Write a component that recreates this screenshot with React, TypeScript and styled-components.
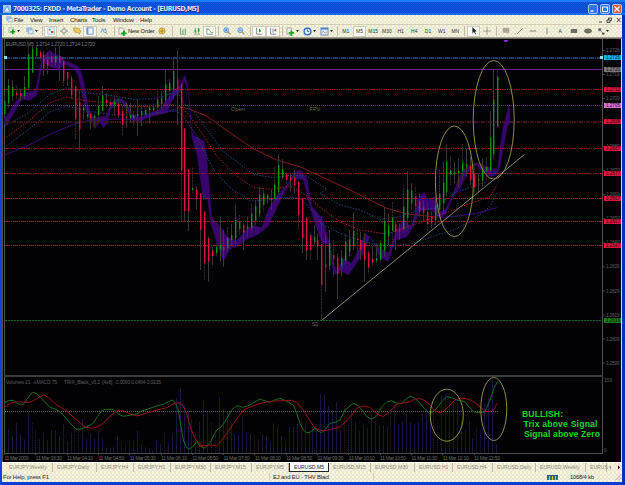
import React from "react";
import styled, { createGlobalStyle } from "styled-components";

const GlobalStyle = createGlobalStyle`
  * { box-sizing: border-box; }
  body { margin: 0; background: #000; overflow: hidden; font-family: "Liberation Sans", Arial, sans-serif; }
`;

const Window = styled.div`
  width: 625px;
  height: 485px;
  display: grid;
  grid-template-rows: 15px 9px 14px 424px 10px 10px 3px;
  background: #0a3fd2;
  border-left: 2px solid #0a46dc;
  border-right: 3px solid #0830bc;
`;

const dither = `
  background-color: #e8e5d4;
  background-image: conic-gradient(#fbfad8 25%, transparent 0 50%, #f3f1e2 0 75%, transparent 0);
  background-size: 4px 4px;
`;

const TitleBar = styled.header`
  display: flex;
  align-items: center;
  gap: 2px;
  background-color: #0a4fd8;
  background-image: linear-gradient(#187cf8 2px, transparent 2px 13px, #136cf0 13px),
    conic-gradient(#0b46cf 25%, #0d5be2 0 50%, #0b46cf 0 75%, #0d5be2 0);
  background-size: 100% 100%, 2px 2px;
  margin: 0 -3px 0 -2px;
  padding: 2px 3px 0 3px;
`;

const Title = styled.h1`
  flex: 1;
  margin: 0;
  font: bold 6.9px "DejaVu Sans Condensed", "DejaVu Sans", sans-serif;
  letter-spacing: -0.53px;
  word-spacing: 0.3px;
  color: #dfe8f8;
  text-shadow: 0.5px 0.5px #082a8c;
  white-space: pre;
`;

const WinButton = styled.span<{ $close?: boolean }>`
  display: flex;
  width: 10px;
  height: 10px;
  border: 1px solid #a9c6f4;
  border-radius: 2px;
  background: ${(p) => (p.$close ? "#d65a35" : "#3274e6")};
  svg { display: block; width: 8px; height: 8px; }
`;

const MenuBar = styled.nav`
  ${dither}
  display: flex;
  align-items: center;
  padding-left: 2px;
  font-size: 6px;
  color: #161616;
`;

const MenuItem = styled.span<{ $w: number }>`
  width: ${(p) => p.$w}px;
  line-height: 8px;
  letter-spacing: -0.1px;
`;

const ChildControls = styled.span`
  margin-left: auto;
  height: 8px;
  svg { display: block; }
`;

const ToolBar = styled.div`
  ${dither}
  display: flex;
  align-items: center;
  border-top: 1px solid #d4cdb9;
  border-bottom: 1px solid #a39c88;
`;

const Tool = styled.span<{ $w: number; $on?: boolean }>`
  display: flex;
  flex: none;
  align-items: center;
  justify-content: center;
  width: ${(p) => p.$w}px;
  height: 11px;
  font-size: 5px;
  color: #333;
  background: ${(p) => (p.$on ? "#faf9f2" : "transparent")};
  box-shadow: ${(p) => (p.$on ? "inset 0 0 0 1px #cfcab8" : "none")};
  svg { display: block; }
`;

const OrderLabel = styled.span`
  flex: none;
  width: 29px;
  padding-left: 1px;
  font-size: 5.7px;
  letter-spacing: -0.1px;
  line-height: 8px;
  color: #111;
  white-space: nowrap;
`;

const Divider = styled.i<{ $m?: number }>`
  flex: none;
  width: 1px;
  height: 10px;
  margin: 0 ${(p) => p.$m ?? 1}px;
  background: #c2bca8;
`;

const ChartArea = styled.main`
  background: #020204;
  border-top: 1px solid #6c6a64;
  border-right: 1px solid #dcd8cc;
  svg { display: block; margin-top: -1px; }
`;

const TabStrip = styled.nav`
  ${dither}
  display: flex;
  padding-left: 3px;
  border-top: 1px solid #fff;
  font-size: 5.1px;
  color: #8d8a78;
`;

const Tab = styled.span<{ $w: number; $active?: boolean }>`
  flex: none;
  width: ${(p) => p.$w}px;
  height: 9px;
  padding-left: 4px;
  line-height: 9px;
  white-space: nowrap;
  color: ${(p) => (p.$active ? "#222" : "inherit")};
  background: ${(p) => (p.$active ? "#fff" : "transparent")};
  border: 0 solid ${(p) => (p.$active ? "#222" : "#bdb8a6")};
  border-width: ${(p) => (p.$active ? "0 1px 1px 1px" : "0 1px 0 0")};
`;

const TabArrows = styled.span`
  flex: 1;
  display: flex;
  justify-content: flex-end;
  align-items: center;
  svg { display: block; }
`;

const StatusBar = styled.footer`
  ${dither}
  display: flex;
  align-items: center;
  font-size: 5.8px;
  color: #1c1c1c;
  white-space: nowrap;
`;

const StatusCell = styled.span<{ $w: number; $pad?: number }>`
  flex: none;
  width: ${(p) => p.$w}px;
  padding-left: ${(p) => p.$pad ?? 1}px;
  line-height: 8px;
  border-right: 1px solid #d4c9b4;
  letter-spacing: -0.12px;
`;

const Bars = styled.span`
  width: 11px;
  height: 5px;
  margin-left: 34px;
  margin-right: 12px;
  background: repeating-linear-gradient(90deg, #2c7a52 0 2px, #b9cc50 2px 3px);
  border-top: 1px solid #28548c;
`;

const Grip = styled.svg`
  margin-left: auto;
`;

const Rate = styled.span`
  letter-spacing: -0.2px;
`;

type Pt = [number, number];

/* Series are stored in thirds of a pixel, relative to a section origin. */
const at = (ox: number, oy: number, raw: string): Pt[] =>
  raw.split(" ").map((s) => {
    const [x, y] = s.split(",").map(Number);
    return [ox + x / 3, oy + y / 3];
  });
const pts = (...parts: Pt[][]) => parts.flat().map(([x, y]) => `${x.toFixed(1)},${y.toFixed(1)}`).join(" ");

interface Candle { x: number; up: boolean; top: number; bottom: number; high: number; low: number; }

const candles = (ox: number, oy: number, raw: string): Candle[] =>
  raw.trim().split(/\s+/).map((s) => {
    const [x, t, b, h, l] = s.slice(1).split(",").map(Number);
    return { x: Math.floor(ox + x / 3), up: s[0] === "g", top: oy + t / 3, bottom: oy + b / 3, high: oy + h / 3, low: oy + l / 3 };
  });

const CANDLES: Candle[] = [
  ...candles(0, 36, `g14,195,235,180,245 g26,148,202,130,215 g38,153,180,133,195 r50,170,178,150,190 r62,172,180,160,195
   g74,153,180,120,190 g86,55,155,30,165 g97,38,110,30,110 g108,35,60,30,65 r120,48,65,40,75 r131,57,97,45,120
   r143,70,90,50,115 r154,62,78,50,90 g166,60,80,35,90 r178,60,80,30,135 r190,75,135,75,150 r202,108,128,108,150
   r213,127,178,120,190 r225,150,248,150,310 r237,198,280,160,345 g249,215,223,210,250 g261,235,243,210,250
   r272,233,247,230,280 g284,240,245,235,275 g296,210,238,180,260 g308,178,225,150,225 r319,192,200,170,215
   r331,198,208,190,215 g343,197,207,180,240 r354,203,238,185,245 r366,225,268,210,300 r378,242,246,200,275
   g390,238,245,200,260 g401,238,246,225,270 g413,235,240,190,300 g425,225,238,210,270 g437,222,236,205,245
   g448,215,222,205,262 g460,215,222,205,225 g472,190,215,160,235 g484,185,205,165,220 g496,145,192,100,205
   g507,140,165,130,190 g519,105,160,65,190 r531,130,160,42,268 r543,145,405,145,555`),
  ...candles(140, 36, `r134,277,525,277,555 r145,400,525,400,585 g157,456,462,395,470 r169,462,490,450,520`),
  ...candles(180, 150, `r61,130,240,130,360 r73,185,340,185,390 r85,265,335,260,395 r97,300,318,290,345 g108,290,310,280,320
   g120,285,298,200,335 r131,290,300,240,350 g143,262,295,230,305 g155,255,270,220,285 g167,210,265,163,280
   g179,215,237,195,255 r190,225,248,220,300 g202,230,237,200,260 g214,190,235,160,250 g226,168,212,150,225
   g237,135,190,110,200 g249,130,165,115,185 g261,137,147,130,160 r273,145,150,120,180 g284,103,147,50,160
   g296,45,125,13,135 g308,57,83,28,90 r320,72,90,65,100 r331,80,92,70,125 r343,83,107,60,130 r354,95,195,95,240
   r366,145,265,145,310 r378,205,303,200,330 r390,255,300,250,330 g402,262,275,225,285 r413,270,290,250,330
   r425,282,405,200,510 r437,343,352,255,425 g449,280,347,240,360 r460,315,328,270,380 r472,322,372,310,447
   g484,323,347,300,380 g496,275,332,250,345 g508,268,305,240,320 g519,243,288,187,300 r531,265,270,240,330`),
  ...candles(320, 130, `r122,330,360,305,390 r133,340,390,310,455 r145,367,413,360,430 r157,388,398,350,405 g169,385,392,340,400
   g181,338,390,330,400 g193,272,362,232,380 g204,287,320,250,345 g216,262,302,215,335 r227,282,305,275,360
   r239,298,305,280,330 g251,230,298,165,310 g263,178,265,122,290 g275,182,220,160,240 r286,198,228,170,245
   r298,215,245,190,260 r310,232,248,210,275 r322,245,282,220,305 r333,258,280,245,295 g345,225,270,200,285
   g357,190,240,120,250 g369,158,220,95,250 g380,95,187,43,200 g392,120,135,80,165 g404,126,130,95,160
   g416,122,130,85,170 g427,97,125,43,150 g439,103,110,55,140 r451,108,150,80,165 r462,130,172,100,190
   g474,148,152,130,190 g486,115,152,85,170 g498,110,125,80,150`),
  ...candles(420, 36, `g210,305,402,225,405 g221,190,355,100,370 g233,122,272,100,272`),
];

const CLOUD = pts(
  at(0, 36, "12,245 25,235 35,215 50,195 65,172 85,168 105,165 112,140 120,90 128,65 148,42 165,55 185,62 195,75 215,82 235,92 243,110 252,140 262,200 275,240 290,245 320,240 330,205 345,190 365,188 380,200 395,235 420,245 450,232 480,220 500,192 520,165 540,150 554,118 562,140 568,190 573,265 580,298"),
  at(140, 36, "165,300 192,315 200,360 210,480 215,545 240,570 262,605 290,615 320,580 340,568 365,575 385,520 410,480 440,447 465,410 480,402 500,425 515,510 530,528"),
  at(180, 150, "425,205 435,230 448,280 460,340 470,366"),
  at(320, 130, "60,405 72,385 95,400 120,350 135,310 155,325 170,350 190,360 205,370 230,300 250,270 275,290 295,205 312,185 325,210 345,200 360,245 375,240 400,190 415,145 440,110 470,98 500,108 525,120 533,115"),
  at(420, 36, "240,340 250,270 268,205 270,255 260,280 240,390 230,415"),
  at(320, 130, "515,140 490,130 470,105 445,125 420,175 400,200 375,254 360,265 335,240 300,240 280,290 260,320 225,330 205,395 175,375 160,335 150,320 130,370 105,405 85,435 60,420 45,435"),
  at(180, 150, "465,374 455,335 445,282 425,275 410,235 395,190"),
  at(140, 36, "490,430 455,430 440,455 420,495 385,570 355,595 320,610 300,625 270,640 250,675 230,620 212,560 203,490 190,490 180,420 172,360 155,300 149,200"),
  at(0, 36, "562,160 554,135 540,165 520,185 500,230 450,242 420,255 400,257 385,230 365,197 345,205 330,225 322,262 310,276 300,255 285,278 270,250 255,215 245,165 235,120 225,98 195,85 175,98 150,92 128,75 120,120 110,178 90,193 65,190 45,225 30,250 15,275"),
);

const MAS: { color: string; dash?: string; points: string }[] = [
  { color: "#24467e", dash: "1.4 1.5", points: pts(at(0, 36, "12,270 80,235 150,175 200,155 250,170 310,175 400,190 470,188 530,165"), at(140, 36, "130,200 165,230 200,280 250,345 300,385 340,415 400,425 450,418 500,420 560,460"), at(320, 130, "0,190 60,225 120,240 180,268 230,262 300,240 345,235 400,190 470,165 500,155")) },
  { color: "#b01a28", dash: "1.4 1.5", points: pts(at(0, 36, "12,308 80,260 150,200 200,183 260,195 330,200 400,213 470,210 520,205 550,220"), at(140, 36, "145,235 185,290 230,360 290,420 340,455 400,460 450,450 500,480"), at(320, 130, "0,232 60,275 120,300 200,312 280,285 345,260 400,240 450,220 510,200 530,165")) },
  { color: "#24427e", dash: "1.4 1.5", points: pts(at(0, 36, "12,335 80,285 150,228 200,210 260,225 330,235 400,238 530,225"), at(140, 36, "130,240 170,300 220,400 270,455 330,495 380,492 430,485 480,485 530,540"), at(320, 130, "0,280 60,310 130,335 200,350 280,340 350,315 400,300 450,275 510,230 530,190")) },
  { color: "#3d0a74", points: pts(at(0, 36, "12,358 80,330 150,295 220,265 280,250 400,250 470,235 530,218")) },
  { color: "#7c1c1c", points: pts(at(140, 36, "120,212 150,220 200,240 270,290 340,338 410,372 480,392"), at(320, 130, "0,138 100,185 200,235 260,252 340,260")) },
  { color: "#3d0a74", points: pts(at(320, 130, "350,262 400,260 470,250 530,233")) },
];

const LEVELS = [
  { y: 57, color: "#17406c", dash: "5 1 1 1", tag: "#08b4f0", label: "1.2726", w: 1.6 },
  { y: 69, color: "#6a1c9c", dash: undefined, tag: "#777", label: "1.2720", w: 1 },
  { y: 89, color: "#960f22", dash: "4 1 1 1", tag: "#dc143c", label: "1.2712", w: 1 },
  { y: 105, color: "#74318c", dash: "1 1", tag: "#da70d6", label: "1.2705", w: 1 },
  { y: 121, color: "#3c1412", dash: "4 1 1 1", tag: "#dc143c", label: "1.2699", w: 2 },
  { y: 148, color: "#960f22", dash: "4 1 1 1", tag: "#dc143c", label: "1.2687", w: 1 },
  { y: 173, color: "#960f22", dash: "4 1 1 1", tag: "#dc143c", label: "1.2677", w: 1 },
  { y: 198, color: "#a01020", dash: "5 1 1 1", tag: "#dc143c", label: "1.2667", w: 1 },
  { y: 221, color: "#a01020", dash: "5 1 1 1", tag: "#dc143c", label: "1.2657", w: 1 },
  { y: 245, color: "#a01020", dash: "5 1 1 1", tag: "#dc143c", label: "1.2647", w: 1 },
  { y: 320, color: "#14691c", dash: "1.5 1.5", tag: "#158015", label: "1.2616", w: 1 },
];

/* The 1.2699 tick is fully covered by its level tag. */
const PRICES = ["1.2728", "1.2719", "1.2709", "", "1.2689", "1.2679", "1.2669", "1.2659", "1.2649", "1.2639", "1.2629", "1.2619", "1.2609", "1.2599"];
const TIMES = ["2009", "03:30", "04:10", "04:50", "05:30", "06:10", "06:50", "07:30", "08:10", "08:50", "09:30", "10:10", "10:50", "11:30", "12:10", "12:50"];

/* Bar tops of the volume histogram, oldest first. */
const VOLUMES = [178, 198, 158, 193, 208, 125, 158, 180, 208, 188, 210, 178, 182, 198, 162, 213, 188, 158, 158, 147, 208, 190, 205, 180, 205, 232, 235, 232, 198, 215, 220, 212, 210, 182, 222, 232, 235, 240, 210, 222, 188, 220, 190, 85, 55, 105, 120, 148, 188, 155, 90, 130, 158, 180, 82, 115, 125, 158, 192, 195, 140, 188, 192, 195, 208, 195, 198, 218, 160, 172, 198, 215, 170, 170, 160, 150, 160, 182, 170, 180, 72, 75, 108, 120, 95, 180, 108, 165, 120, 155, 182, 160, 175, 130, 155, 165, 165, 170, 130, 110, 165, 155, 120, 158, 162, 158, 130, 115, 110, 130, 150, 75, 70, 98, 100, 100, 150, 180, 152, 205, 175, 180, 100, 85, 30, 222];
const DASHED = new Set([6, 7, 17, 18, 29, 30, 40, 52, 53, 63, 64, 75, 86, 87, 98, 109, 110, 120, 121]);
const RED_VOL = new Set([29, 40, 63, 64, 75, 86, 98, 109]);

const TRIX = pts(
  at(0, 370, "12,98 25,92 40,91 55,102 70,103 80,88 97,67 110,71 120,80 135,97 150,112 165,117 180,125 200,147 215,165 228,177 240,178 260,170 280,160 292,140 305,122 320,118 340,118 355,132 370,139 390,136 410,132 425,123 450,115 470,108 490,103 505,95 518,90 528,103 535,120 542,165 550,210 558,230 567,238 578,230 590,215"),
  at(200, 370, "0,228 12,235 30,220 40,198 50,180 62,172 75,155 95,120 110,107 130,112 150,105 165,95 180,88 210,97 225,90 240,85 260,94 280,105 290,130 300,160 310,180 320,188 330,187 345,175 355,183 365,188 378,175 390,160 405,157 420,150 435,120 460,100 475,107 490,125 500,140 515,147 530,138 545,110 560,96 575,92 590,100 605,100 620,86"),
  at(410, 370, "0,79 15,85 30,100 45,118 60,132 80,115 95,95 110,80 125,83 140,90 165,95 175,108 190,125 207,128 225,125 240,90 252,55 262,35"),
);
const SIGNAL = pts(
  at(0, 370, "12,113 30,100 50,95 90,97 110,86 130,75 145,82 170,105 200,123 230,150 255,171 275,175 295,169 310,160 330,138 350,122 370,123 390,132 410,138 440,129 470,120 500,113 520,102 535,98 548,106 560,130 572,175 585,205 595,218 610,228"),
  at(200, 370, "0,229 30,225 50,227 65,212 80,190 105,155 130,120 160,107 190,98 220,93 250,92 275,91 290,97 310,120 330,152 345,175 370,183 395,178 420,170 445,148 470,115 490,108 510,112 530,132 550,140 570,123 590,103 610,99"),
  at(410, 370, "0,95 15,87 30,86 45,92 60,105 75,123 90,128 105,120 120,105 135,90 150,85 165,85 180,90 195,98 210,110 225,124 240,125 252,118 262,100"),
);

function PriceAxis() {
  return (
    <g fontSize="5">
      {PRICES.map((p, i) => (
        <g key={i}>
          <path d={`M603 ${50.5 + i * 24.05}h2`} stroke="#4a4a4a" />
          {p && <text x="606" y={52 + i * 24.05} fill="#5a5a5a" textLength="13.5">{p}</text>}
        </g>
      ))}
      {LEVELS.map((l) => (
        <g key={l.label}>
          <rect x="604" y={l.y - 2} width="17" height="5" fill={l.tag} />
          <text x="606" y={l.y + 2.3} fill="#190612" textLength="14" lengthAdjust="spacingAndGlyphs">{l.label}</text>
        </g>
      ))}
      <text x="604" y="382" fill="#565656" textLength="8">159</text>
      <text x="604" y="452" fill="#565656">0</text>
    </g>
  );
}

function Chart() {
  return (
    <svg width="619" height="424" viewBox="2 38 619 424" fontFamily='"Liberation Sans", Arial, sans-serif'>
      <path d="M2.5 38v424M4.5 39v415M602.5 39v415M4 453.5h599" stroke="#4c4c4c" fill="none" />
      <rect x="4" y="375" width="599" height="2" fill="#3c3c3c" />
      <polygon points={CLOUD} fill="#37056c" stroke="#37056c" strokeWidth="0.5" />
      {MAS.map((m, i) => (
        <polyline key={i} points={m.points} fill="none" stroke={m.color} strokeDasharray={m.dash} strokeWidth="1" />
      ))}
      <g shapeRendering="crispEdges">
        {LEVELS.map((l) => (
          <path key={l.y} d={`M5 ${l.y + (l.w > 1 ? 1 : 0.5)}H602`} stroke={l.color} strokeWidth={l.w} strokeDasharray={l.dash} />
        ))}
      </g>
      <rect x="4" y="56" width="3" height="3" fill="#8fd8f4" />
      <rect x="600" y="56" width="3" height="3" fill="#8fd8f4" />
      <path d="M503.500 40h5l-1.500 2h-2z" fill="#8a2be2" />
      {CANDLES.map((c, i) => (
        <g key={i}>
          <path d={`M${c.x + 0.5} ${c.high}V${c.low}`} stroke="#373737" strokeDasharray={i % 3 ? undefined : "1 0.5"} />
          <rect x={c.x} y={c.top} width="1.4" height={Math.max(1, c.bottom - c.top)} fill={c.up ? "#149018" : "#df1044"} />
        </g>
      ))}
      <g fill="#666" fontSize="5.6">
        <text x="231" y="111" textLength="14">Open</text>
        <text x="309.5" y="111" textLength="11">FPV</text>
        <text x="312" y="326" textLength="6.5">S1</text>
        <text x="6" y="45.5" fontSize="5" fill="#757575" textLength="89">EURUSD,M5&nbsp; 1.2714 1.2720 1.2714 1.2720</text>
        <text x="6" y="383.5" fontSize="5" fill="#5c5c5c" textLength="51">Volumes 21&nbsp; -xMACD 75</text>
        <text x="64" y="383.5" fontSize="5" fill="#5c5c5c" textLength="97">TRIX_Black_v5.2&nbsp; [4x8]&nbsp;&nbsp; 0.0090 0.0404 0.0135</text>
      </g>
      <path d="M321.5 320.5L524.5 154.5" stroke="#8b8778" strokeWidth="1" />

      {VOLUMES.map((v, i) => (
        <path key={i} d={`M${Math.floor(8.6 + i * 3.902) + 0.5} ${370 + v / 3}V453`} stroke={RED_VOL.has(i) ? "#3a1020" : "#17173a"} strokeDasharray={DASHED.has(i) ? "1.4 1" : undefined} />
      ))}
      <path d="M5 411.5H498" stroke="#656565" strokeDasharray="1 1" />
      <polyline points={TRIX} fill="none" stroke="#146e1a" />
      <polyline points={SIGNAL} fill="none" stroke="#960f1c" />
      <g fill="none" stroke="#8e8a44" strokeWidth="1">
        <ellipse cx="493.7" cy="119.8" rx="20.5" ry="59.3" />
        <ellipse cx="454.4" cy="181.3" rx="19" ry="55.3" />
        <ellipse cx="446.8" cy="415.2" rx="16.5" ry="26" />
        <ellipse cx="493.8" cy="409" rx="13" ry="31.5" />
      </g>
      <g fill="#16d82a" fontSize="8.6" fontWeight="bold">
        <text x="522" y="416.5" textLength="41">BULLISH:</text>
        <text x="523.5" y="426.5" textLength="74">Trix above Signal</text>
        <text x="524" y="436.5" textLength="76">Signal above Zero</text>
      </g>
      <g fill="#6a6a6a" fontSize="5">
        {TIMES.map((t, i) => (
          <g key={t}>
            <path d={`M${Math.round(4 + i * 31.3) + 0.5} 453v2`} stroke="#4c4c4c" />
            <text x={4.5 + i * 31.3} y="460" textLength={i ? 26 : 24}>{`11 Mar ${t}`}</text>
          </g>
        ))}
      </g>
      <PriceAxis />
    </svg>
  );
}

const GLYPHS: Record<string, React.ReactNode> = {
  newChart: <><path d="M1 1h6v6h-6z" fill="#dfe9e0" stroke="#7a9a80" strokeWidth=".6" /><path d="M3 6h6M6 3v6" stroke="#12a018" strokeWidth="2" /></>,
  profiles: <><path d="M1 1h6v5h-6z" fill="#a9cdf2" stroke="#6a94c4" strokeWidth=".7" /><path d="M3 3.5h6v5h-6z" fill="#dceaf8" stroke="#6a94c4" strokeWidth=".7" /></>,
  market: <><path d="M1 1h8v8h-8z" fill="#f4f8fc" stroke="#78aacc" strokeWidth=".7" /><path d="M2.5 2.5h2v2h-2z" fill="#2b9c38" /><path d="M5 5h3v2.5h-3z" fill="#dc4630" /></>,
  move: <><path d="M5 0v10M0 5h10" stroke="#898575" /><circle cx="5" cy="5" r="2.6" fill="#f2f0e4" stroke="#777" strokeWidth=".9" /></>,
  folder: <path d="M1 1h3l1 1h3v2l2 1-2 4-1-2H3V5H1z" fill="#f0cf52" stroke="#a68627" strokeWidth=".7" />,
  panel: <><path d="M1 1h8v8h-8z" fill="#f0f6fc" stroke="#5583bf" strokeWidth=".9" /><path d="M1 1h2v8H1z" fill="#6c98cd" /></>,
  tester: <><path d="M1 7l2-5 2 4 2-4v6" fill="none" stroke="#6b9cc8" /><circle cx="6" cy="5" r="2" fill="#cce2f5" stroke="#5580aa" strokeWidth=".6" /><path d="M7.5 6.5l2 2.5" stroke="#b58d40" /></>,
  order: <><path d="M1 1h4l2 2v5H1z" fill="#f1eee4" stroke="#777" strokeWidth=".6" /><path d="M3.5 7h6M6.5 4v6" stroke="#0fa01c" strokeWidth="2" /></>,
  expert: <><circle cx="5" cy="5" r="3.9" fill="#f0d05c" stroke="#a68436" strokeWidth=".9" /><path d="M5 2v6M2 5h6" stroke="#a47b15" /></>,
  bars: <path d="M2 1v8h7M5 3v5M8 2v6M4 6h1M7 4h1" fill="none" stroke="#3c8c48" strokeWidth=".9" />,
  candlesIcon: <><path d="M1 9h8M3 1v7M7 1v7" stroke="#5e8a60" strokeWidth=".8" /><path d="M2 4h2v3H2zM6 2h2v4H6z" fill="#2b9a3a" /></>,
  lineIcon: <path d="M1 1v8h8M1 3q3 -1 4 2t4 2" fill="none" stroke="#4c8c54" strokeWidth=".9" />,
  zoomIn: <><circle cx="4" cy="4" r="3" fill="#b8d8f4" stroke="#3c7cc4" strokeWidth=".9" /><path d="M2.5 4h3M4 2.5v3" stroke="#285ea8" strokeWidth=".8" /><path d="M6.3 6.3l3 3" stroke="#b98d2c" strokeWidth="1.4" /></>,
  zoomOut: <><circle cx="4" cy="4" r="3" fill="#b8d8f4" stroke="#3c7cc4" strokeWidth=".9" /><path d="M2.5 4h3" stroke="#285ea8" strokeWidth=".8" /><path d="M6.3 6.3l3 3" stroke="#b98d2c" strokeWidth="1.4" /></>,
  scroll: <><path d="M2 1v8h7" fill="none" stroke="#555" strokeWidth=".8" /><path d="M5 2l3 3-3 2z" fill="#189c28" /></>,
  shift: <><path d="M2 1v8h7M5 2v5" fill="none" stroke="#456e9c" strokeWidth=".9" /><path d="M9 2v4L6 4z" fill="#c05030" /></>,
  indicator: <><path d="M1 1h5v7H1z" fill="#eee" stroke="#777" strokeWidth=".6" /><path d="M3 6.5h6M6 4v6" stroke="#14a81c" strokeWidth="2" /></>,
  clock: <><circle cx="5" cy="5" r="3.8" fill="#dcecff" stroke="#2464bc" strokeWidth="1.4" /><path d="M5 2.5V5h2" fill="none" stroke="#234" strokeWidth=".7" /></>,
  template: <><path d="M1 1h8v8H1z" fill="#d9e9f7" stroke="#5684b8" strokeWidth=".9" /><path d="M1 2h8" stroke="#4478bc" strokeWidth="1.5" /><path d="M2 6l2-1 2 2 2-2" fill="none" stroke="#d07a48" strokeWidth=".8" /></>,
  cursor: <path d="M3 0v8l2-2 1.4 3 1-.5L6 5.5h2.5z" fill="#222" />,
  cross: <path d="M5 0v10M0 5h10" stroke="#8a8778" strokeWidth=".9" />,
  fibo: <><path d="M1 1h8v6H1z" fill="#bcb8a6" /><path d="M1 2.5h8M1 4.5h8M1 6.5h8M7 8.5h2" stroke="#827e6e" strokeWidth=".6" /></>,
  trend: <path d="M1.500 8.500l7-7" stroke="#777" strokeWidth="1.1" />,
  hline: <path d="M1 5h8" stroke="#777" strokeWidth="1.1" />,
  vline: <path d="M5 1v8" stroke="#777" strokeWidth="1.1" />,
  rect: <rect x="1" y="2.5" width="8" height="5" fill="#6f6d64" />,
  ellipse: <ellipse cx="5" cy="5" rx="4.5" ry="2.7" fill="#777568" stroke="#4e4c44" strokeWidth=".6" />,
  arrows: <path d="M1 1h3v3H1zM4 4l4 4M6 7h3v2H6z" fill="#555" stroke="#555" strokeWidth=".8" />,
};

const Icon = ({ name, size = 8 }: { name: string; size?: number }) => (
  <svg width={size} height={size} viewBox="0 0 10 10">{GLYPHS[name]}</svg>
);
const Drop = () => <svg width="5" height="4" viewBox="0 0 5 4"><path d="M1 1h3L2.5 3z" fill="#222" /></svg>;

const MENU: [string, number][] = [["File", 16], ["View", 19], ["Insert", 21], ["Charts", 22], ["Tools", 21], ["Window", 27], ["Help", 20]];
const FRAMES = ["M1", "M5", "M15", "M30", "H1", "H4", "D1", "W1", "MN"];
const TABS: [string, number][] = [
  ["EURJPY,Weekly", 48], ["EURJPY,Daily", 44], ["EURJPY,H4", 37], ["EURJPY,H1", 37], ["EURJPY,M30", 40], ["EURJPY,M15", 41], ["EURJPY,M5", 37],
  ["EURUSD,M5", 40], ["EURUSD,M15", 42], ["EURUSD,M30", 44], ["EURUSD,H1", 38], ["EURUSD,H4", 40], ["EURUSD,Daily", 43], ["EURUSD,Weekly", 50],
];

export default function App() {
  return (
    <>
      <GlobalStyle />
      <Window>
        <TitleBar>
          <svg width="8" height="8" viewBox="0 0 8 8"><rect width="8" height="8" fill="#9cc8ec" /><path d="M1 7l3-6 3 6z" fill="#e8f2fa" stroke="#4a88bc" strokeWidth=".7" /></svg>
          <Title>7000325: FXDD - MetaTrader - Demo Account - [EURUSD,M5]</Title>
          <WinButton><svg viewBox="0 0 8 8"><path d="M1.5 6h3" stroke="#fff" strokeWidth="1.3" /></svg></WinButton>
          <WinButton><svg viewBox="0 0 8 8"><path d="M1.5 2h5v4.5h-5z" fill="none" stroke="#fff" /></svg></WinButton>
          <WinButton $close><svg viewBox="0 0 8 8"><path d="M1.5 1.5l5 5M6.5 1.5l-5 5" stroke="#fff" strokeWidth="1.2" /></svg></WinButton>
        </TitleBar>
        <MenuBar>
          <Tool $w={10}><Icon name="profiles" size={7} /></Tool>
          {MENU.map(([label, w]) => <MenuItem key={label} $w={w}>{label}</MenuItem>)}
          <ChildControls>
            <svg width="24" height="8" viewBox="0 0 24 8"><path d="M1 6h3M9 4h3v2.500h-3zM10.500 4v-2h3v2.500h-1.500M19 2l3.500 4M22.500 2l-3.500 4" fill="none" stroke="#333" strokeWidth=".9" /></svg>
          </ChildControls>
        </MenuBar>
        <ToolBar>
          <Divider $m={1} />
          <Tool $w={18}><Icon name="newChart" /><Drop /></Tool>
          <Tool $w={18}><Icon name="profiles" /><Drop /></Tool>
          <Divider />
          <Tool $w={13} $on><Icon name="market" /></Tool>
          <Tool $w={13}><Icon name="move" /></Tool>
          <Tool $w={13}><Icon name="folder" /></Tool>
          <Tool $w={14} $on><Icon name="panel" /></Tool>
          <Tool $w={14}><Icon name="tester" /></Tool>
          <Divider $m={2.5} />
          <Tool $w={10}><Icon name="order" size={9} /></Tool>
          <OrderLabel>New Order</OrderLabel>
          <Tool $w={12}><Icon name="expert" /></Tool>
          <Divider $m={3.5} />
          <Tool $w={14}><Icon name="bars" /></Tool>
          <Tool $w={13}><Icon name="candlesIcon" /></Tool>
          <Tool $w={13} $on><Icon name="lineIcon" /></Tool>
          <Divider $m={1.5} />
          <Tool $w={14}><Icon name="zoomIn" /></Tool>
          <Tool $w={14}><Icon name="zoomOut" /></Tool>
          <Divider $m={1.5} />
          <Tool $w={14} $on><Icon name="scroll" /></Tool>
          <Tool $w={14} $on><Icon name="shift" /></Tool>
          <Divider $m={1.5} />
          <Tool $w={17}><Icon name="indicator" size={9} /><Drop /></Tool>
          <Tool $w={17}><Icon name="clock" size={9} /><Drop /></Tool>
          <Tool $w={17}><Icon name="template" size={9} /><Drop /></Tool>
          <Divider $m={1.5} />
          {FRAMES.map((f) => <Tool key={f} $w={13.7} $on={f === "M5"}>{f}</Tool>)}
          <Divider $m={2} />
          <Tool $w={13} $on><Icon name="cursor" /></Tool>
          <Tool $w={14}><Icon name="cross" /></Tool>
          <Divider $m={2.3} />
          <Tool $w={13}><Icon name="fibo" /></Tool>
          <Tool $w={14}><Icon name="trend" /></Tool>
          <Tool $w={13}><Icon name="hline" /></Tool>
          <Tool $w={14}><Icon name="vline" /></Tool>
          <Tool $w={13}>A</Tool>
          <Tool $w={14}><Icon name="rect" /></Tool>
          <Tool $w={14}><Icon name="ellipse" /></Tool>
          <Tool $w={18}><Icon name="arrows" size={7} /><Drop /></Tool>
        </ToolBar>
        <ChartArea><Chart /></ChartArea>
        <TabStrip>
          {TABS.map(([label, w]) => <Tab key={label} $w={w} $active={label === "EURUSD,M5"}>{label}</Tab>)}
          <Tab $w={21}>EURUS</Tab>
          <TabArrows><svg width="14" height="5" viewBox="0 0 14 5"><path d="M3 .5v4l-2-2z" fill="#999" /><path d="M10 .5v4l2-2z" fill="#111" /></svg></TabArrows>
        </TabStrip>
        <StatusBar>
          <StatusCell $w={268}>For Help, press F1</StatusCell>
          <StatusCell $w={104} $pad={3}>EJ and EU - THV Blacl</StatusCell>
          <StatusCell $w={35} />
          <StatusCell $w={36} />
          <StatusCell $w={34} />
          <StatusCell $w={34} />
          <Bars />
          <Rate>1068/4 kb</Rate>
          <Grip width="8" height="8" viewBox="0 0 8 8"><path d="M7.500 1l-6.500 6.500M7.500 4l-3.500 3.500" stroke="#aaa692" strokeWidth=".8" /></Grip>
        </StatusBar>
      </Window>
    </>
  );
}
